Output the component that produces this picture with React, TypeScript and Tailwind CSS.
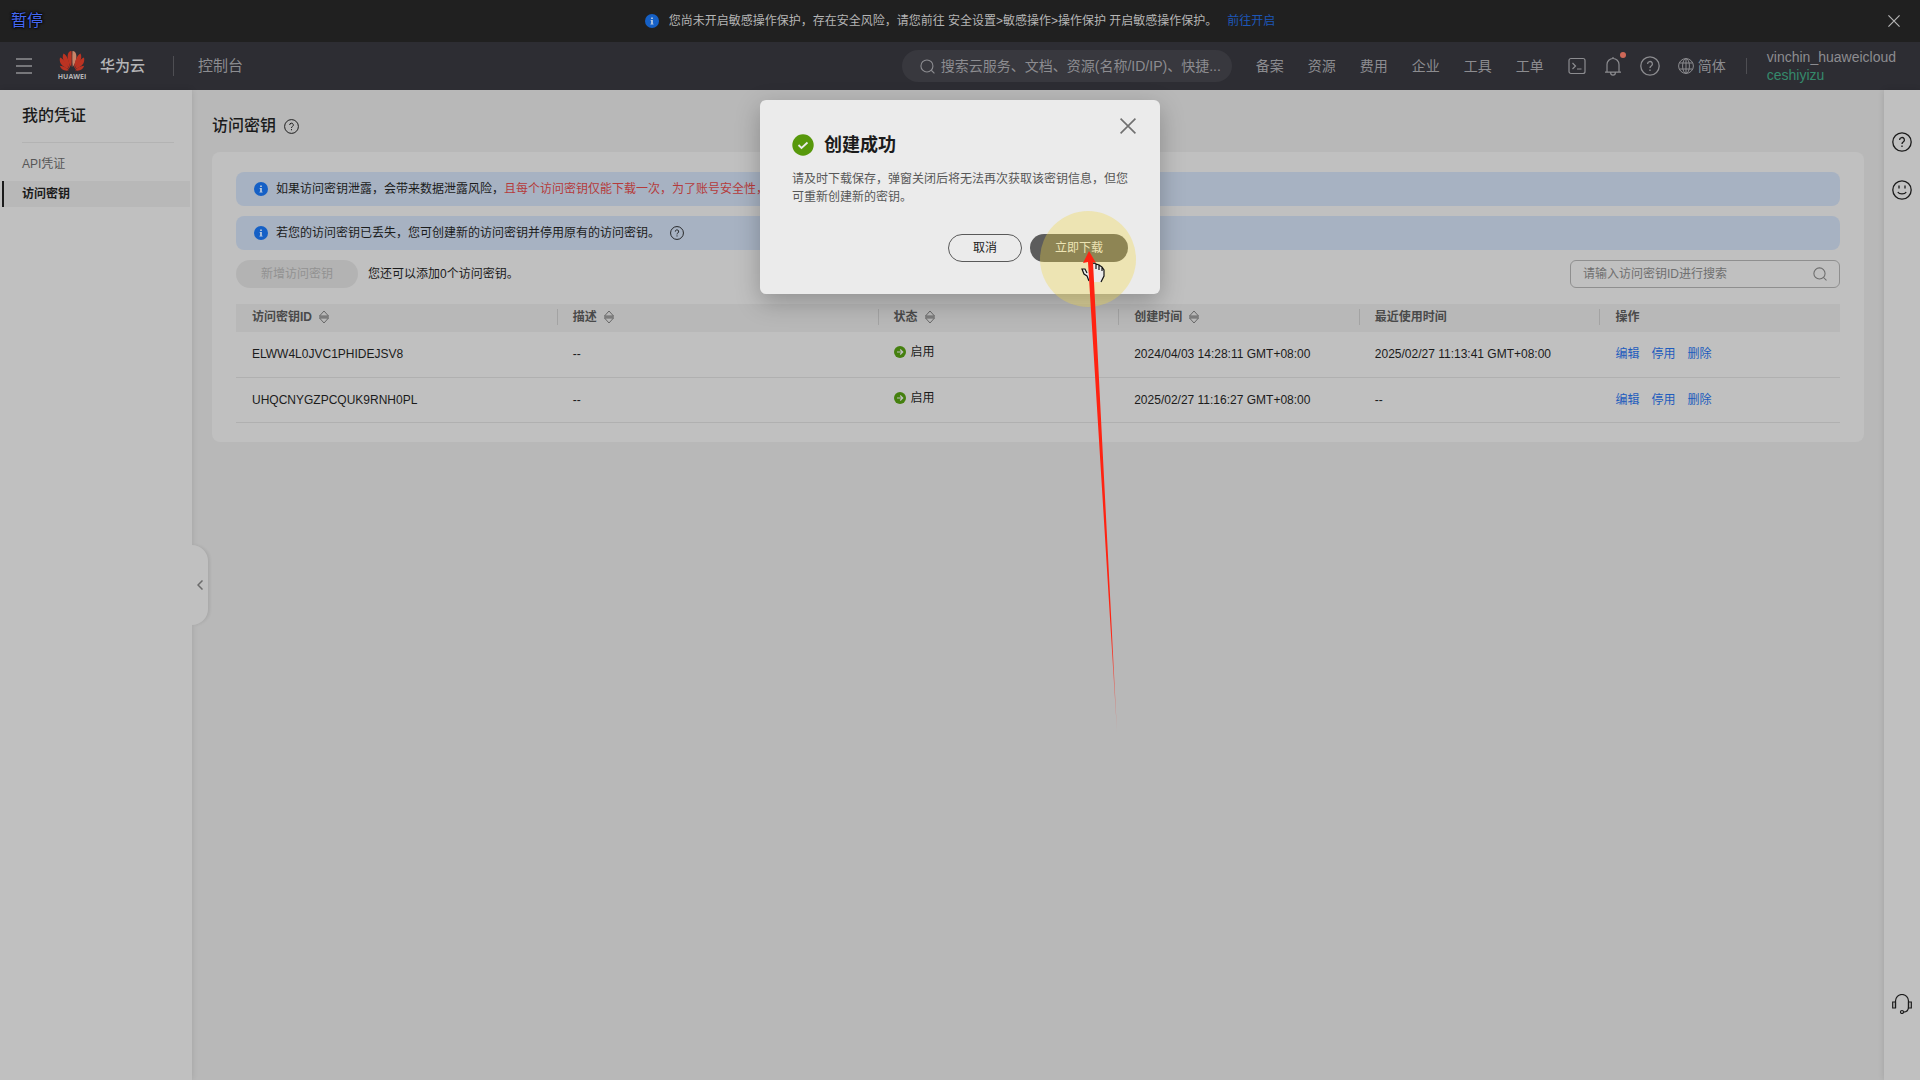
import React, { useState } from 'react';

// --- Types ---
interface AccessKey {
  id: string;
  desc: string;
  created: string;
  lastUsed: string;
}

interface IconProps {
  className?: string;
}

const accessKeys: AccessKey[] = [
  { id: 'ELWW4L0JVC1PHIDEJSV8', desc: '--', created: '2024/04/03 14:28:11 GMT+08:00', lastUsed: '2025/02/27 11:13:41 GMT+08:00' },
  { id: 'UHQCNYGZPCQUK9RNH0PL', desc: '--', created: '2025/02/27 11:16:27 GMT+08:00', lastUsed: '--' },
];

const columns = [
  { label: '访问密钥ID', width: 'w-[20%]', sortable: true },
  { label: '描述', width: 'w-[20%]', sortable: true },
  { label: '状态', width: 'w-[15%]', sortable: true },
  { label: '创建时间', width: 'w-[15%]', sortable: true },
  { label: '最近使用时间', width: 'w-[15%]', sortable: false },
  { label: '操作', width: 'w-[15%]', sortable: false },
];

const navItems = ['备案', '资源', '费用', '企业', '工具', '工单'];

// --- Icons ---
const InfoIcon = ({ className }: IconProps) => (
  <svg viewBox="0 0 16 16" className={className} aria-hidden="true">
    <circle cx="8" cy="8" r="8" fill="#1560c6" />
    <path d="M7 4h2v1.6H7zM6.4 6.8H9V11h.8v1H6.2v-1H7V7.8h-.6z" fill="#b9c9de" />
  </svg>
);

const HelpIcon = ({ className }: IconProps) => (
  <svg viewBox="0 0 20 20" fill="none" stroke="currentColor" strokeWidth="1.3" className={className} aria-hidden="true">
    <circle cx="10" cy="10" r="9.2" />
    <path d="M7.6 8a2.4 2.4 0 1 1 3.6 2c-.8.5-1.2.9-1.2 2" />
    <path d="M10 13.4v1.6" />
  </svg>
);

const CloseIcon = ({ className }: IconProps) => (
  <svg viewBox="0 0 14 14" fill="none" stroke="currentColor" strokeWidth="1.4" className={className} aria-hidden="true">
    <path d="M.5.5l13 13M13.5.5l-13 13" />
  </svg>
);

const SearchIcon = ({ className }: IconProps) => (
  <svg viewBox="0 0 16 16" fill="none" stroke="currentColor" strokeWidth="1.2" className={className} aria-hidden="true">
    <circle cx="7.4" cy="7.4" r="6.4" />
    <path d="M12 12l3.4 3.4" />
  </svg>
);

const SortIcon = () => (
  <svg viewBox="0 0 12 14" fill="none" stroke="#686868" className="h-3.5 w-3" aria-hidden="true">
    <path d="M1.5 6L6 1l4.5 5z" />
    <path d="M1.5 8L6 13l4.5-5z" />
    <path d="M1 7h10" />
  </svg>
);

const HuaweiLogo = () => (
  <svg viewBox="0 0 52 40" className="h-5 w-[26px]" aria-hidden="true">
    <g fill="#bb3322">
      <path d="M24.500 32C17 22 15 8 20 2c2-1.500 3.500-2 5-2 .8 10 .5 22-.5 32z" />
      <path d="M27.500 32C35 22 37 8 32 2c-2-1.500-3.500-2-5-2-.8 10-.5 22 .5 32z" fill="#c98468" />
      <path d="M22 34C12 27 4 15 9 5c7 3 12 16 13 29z" />
      <path d="M30 34c10-7 18-19 13-29-7 3-12 16-13 29z" />
      <path d="M20.500 36C9 33-1 26 2 13c9 4 14 13 18.500 23z" />
      <path d="M31.500 36C43 33 53 26 50 13c-9 4-14 13-18.500 23z" />
      <path d="M20 38.500C12 41 5 38 1.500 29.500c8 1 14 4 18.500 9z" />
      <path d="M32 38.500c8 2.500 15-.5 18.500-9-8 1-14 4-18.500 9z" />
    </g>
  </svg>
);

const TerminalIcon = () => (
  <svg viewBox="0 0 18 18" fill="none" stroke="currentColor" strokeWidth="1.2" className="size-[18px]" aria-hidden="true">
    <rect x="1" y="1.5" width="16" height="15" rx="2" />
    <path d="M4.5 6l3 3-3 3M9 12h4.500" />
  </svg>
);

const BellIcon = () => (
  <svg viewBox="0 0 18 20" fill="none" stroke="currentColor" strokeWidth="1.2" className="h-5 w-[18px]" aria-hidden="true">
    <path d="M1 16.200h16M3 16V8.500a6 6 0 0 1 12 0V16M9 2.500V1M6.600 16.500a2.400 2.600 0 0 0 4.800 0" />
  </svg>
);

const GlobeIcon = () => (
  <svg viewBox="0 0 16 16" fill="none" stroke="currentColor" className="size-4" aria-hidden="true">
    <circle cx="8" cy="8" r="7.4" />
    <ellipse cx="8" cy="8" rx="3.4" ry="7.4" />
    <path d="M8 .6v14.800M1.500 5h13M1.500 11h13" />
  </svg>
);

const SmileIcon = () => (
  <svg viewBox="0 0 20 20" fill="none" stroke="currentColor" strokeWidth="1.3" className="size-5" aria-hidden="true">
    <circle cx="10" cy="10" r="9.2" />
    <path d="M7 5.500v3M13 5.500v3M5.800 12c1.400 2.600 7 2.600 8.400 0" />
  </svg>
);

const HeadsetIcon = () => (
  <svg viewBox="0 0 20 20" fill="none" stroke="currentColor" strokeWidth="1.2" className="size-5" aria-hidden="true">
    <path d="M3.500 14V7a6.500 6.500 0 0 1 13 0v6c0 3-2 5-5 5.200" />
    <path d="M3.500 8H.7v6h2.800zM16.500 8h2.800v6h-2.800z" />
    <circle cx="10" cy="18" r="1.500" />
  </svg>
);

const EnabledIcon = () => (
  <svg viewBox="0 0 12 12" className="size-3" aria-hidden="true">
    <circle cx="6" cy="6" r="6" fill="#45800f" />
    <path d="M3 6h5.500M6.200 3.500L8.700 6 6.200 8.500" fill="none" stroke="#c0c0c0" strokeWidth="1.2" />
  </svg>
);

// Mouse highlight, hand cursor and the red pointer arrow
const Pointer = () => (
  <svg viewBox="0 0 100 530" className="pointer-events-none absolute left-[278px] top-[110px] z-30 h-[530px] w-[100px]" aria-hidden="true">
    <defs>
      <linearGradient id="arrow-fade" gradientUnits="userSpaceOnUse" x1="0" y1="420" x2="0" y2="522">
        <stop offset="0" stopColor="#ff2312" />
        <stop offset="1" stopColor="#ff2312" stopOpacity="0.3" />
      </linearGradient>
    </defs>
    <circle cx="50" cy="49" r="48" fill="#f0d545" fillOpacity="0.34" />
    <path d="M44 59h3l4 4v-9l5-1 6 2 4 5v6l-3 6H52l-5-6z" fill="#ebebeb" />
    <path
      d="M51 71l-2-5-3-2-2-5h3l2 4M54 54l2-1 2 1v5M58 54l3 1v5M61 55l3 2v4M64 57l2 3v6l-3 6"
      fill="none"
      stroke="#111"
      strokeWidth="1.2"
    />
    <path d="M51 41l7 12-3-1 24 470L50 52l-5 1z" fill="url(#arrow-fade)" />
  </svg>
);

function App() {
  const [query, setQuery] = useState('');
  const [keyword, setKeyword] = useState('');

  return (
    <div className="flex min-h-screen flex-col bg-[#b8b8b8] font-['Liberation_Sans','Noto_Sans_CJK_SC',sans-serif] text-xs text-[#1b1b1b]">
      {/* Notice bar */}
      <div className="relative flex h-[42px] items-center justify-center gap-2.5 bg-[#202020] text-[#b5b5b5]">
        <span className="absolute left-[11px] text-base text-[#4668f0] [text-shadow:0_0_2px_#000,0_0_2px_#000,0_0_3px_#000]">暂停</span>
        <InfoIcon className="size-3.5" />
        <span>您尚未开启敏感操作保护，存在安全风险，请您前往 安全设置&gt;敏感操作&gt;操作保护 开启敏感操作保护。</span>
        <a href="#protect" className="text-[#1d57b8]">前往开启</a>
        <button aria-label="关闭提示" className="absolute right-5 text-[#b5b5b5]">
          <CloseIcon className="size-3" />
        </button>
      </div>

      {/* Header */}
      <header className="flex h-12 items-center bg-[#2d2d33] text-sm text-[#8c8c90]">
        <button aria-label="菜单" className="ml-4 flex w-4 flex-col gap-[5px]">
          <span className="h-0.5 w-full bg-[#77777b]" />
          <span className="h-0.5 w-full bg-[#77777b]" />
          <span className="h-0.5 w-full bg-[#77777b]" />
        </button>
        <a href="#home" className="ml-[26px] flex items-center gap-3.5 text-[#b5b5b7]">
          <span className="flex w-7 flex-col items-center gap-0.5">
            <HuaweiLogo />
            <span className="font-['Open_Sans',sans-serif] text-[7px] font-bold leading-2">HUAWEI</span>
          </span>
          <span className="text-[15px] font-medium">华为云</span>
        </a>
        <span className="ml-7 mr-6 h-5 w-px bg-[#4e4e53]" />
        <a href="#console" className="text-[15px]">控制台</a>

        <label className="ml-auto flex h-8 w-[330px] items-center gap-1.5 rounded-full bg-[#38383e] pl-[18px] pr-2">
          <SearchIcon className="size-[15px] shrink-0" />
          <input
            aria-label="搜索"
            value={query}
            onChange={(e) => setQuery(e.target.value)}
            placeholder="搜索云服务、文档、资源(名称/ID/IP)、快捷..."
            className="w-full bg-transparent outline-none placeholder:text-[#8c8c90]"
          />
        </label>
        <nav className="ml-6 flex gap-6">
          {navItems.map((item) => (
            <a key={item} href="#nav">{item}</a>
          ))}
        </nav>
        <div className="ml-6 flex items-center gap-[18px]">
          <button aria-label="终端"><TerminalIcon /></button>
          <button aria-label="通知" className="relative">
            <BellIcon />
            <span className="absolute -right-1 -top-1 size-1.5 rounded-full bg-[#cf6858]" />
          </button>
          <button aria-label="帮助"><HelpIcon className="size-5" /></button>
          <button className="flex items-center gap-1"><GlobeIcon />简体</button>
        </div>
        <span className="mx-5 h-4 w-px bg-[#4e4e53]" />
        <div className="mr-6 leading-[18px]">
          <div>vinchin_huaweicloud</div>
          <div className="text-[#358a6c]">ceshiyizu</div>
        </div>
      </header>

      <div className="flex flex-1">
        {/* Sidebar */}
        <aside className="relative w-48 shrink-0 bg-[#c0c0c0] shadow-[0_0_6px_rgba(0,0,0,0.12)]">
          <h2 className="ml-[22px] mr-[18px] border-b border-[#b3b3b3] pb-3.5 pt-3.5 text-base font-medium">我的凭证</h2>
          <a href="#api" className="mt-1.5 flex h-[30px] items-center pl-[22px] text-[#575757]">API凭证</a>
          <a href="#keys" className="mx-0.5 mt-0.5 flex h-[26px] items-center border-l-2 border-[#1b1b1b] bg-[#b8b8b8] pl-[18px] font-bold">访问密钥</a>
          <button
            aria-label="收起"
            className="absolute left-full top-[455px] flex h-20 w-4 items-center justify-center rounded-r-2xl bg-[#c0c0c0] text-[#6b6b6b] shadow-[2px_0_3px_rgba(0,0,0,0.08)]"
          >
            <svg viewBox="0 0 6 10" fill="none" stroke="currentColor" strokeWidth="1.5" className="h-2.5 w-1.5" aria-hidden="true">
              <path d="M5.500.5L1 5l4.500 4.500" />
            </svg>
          </button>
        </aside>

        {/* Content */}
        <main className="flex-1 px-5 pt-[22px]">
          <h1 className="flex items-center gap-2 text-base font-medium leading-7">
            访问密钥
            <HelpIcon className="size-[15px]" />
          </h1>

          <section className="mt-3 rounded-lg bg-[#c0c0c0] px-6 pb-[19px] pt-5">
            <div className="flex h-[34px] items-center gap-2 overflow-hidden whitespace-nowrap rounded-lg bg-[#a7b2c2] px-[18px]">
              <InfoIcon className="size-3.5 shrink-0" />
              <span>如果访问密钥泄露，会带来数据泄露风险，<span className="text-[#b53b3b]">且每个访问密钥仅能下载一次，为了账号安全性，</span></span>
            </div>
            <div className="mt-2.5 flex h-[34px] items-center gap-2 rounded-lg bg-[#a7b2c2] px-[18px]">
              <InfoIcon className="size-3.5 shrink-0" />
              <span>若您的访问密钥已丢失，您可创建新的访问密钥并停用原有的访问密钥。</span>
              <HelpIcon className="ml-0.5 size-3.5" />
            </div>

            <div className="mt-2.5 flex items-center">
              <button disabled className="h-7 rounded-full bg-[#b3b3b3] px-[25px] text-[#929292]">新增访问密钥</button>
              <span className="ml-2.5">您还可以添加0个访问密钥。</span>
              <label className="ml-auto flex h-7 w-[270px] items-center rounded-md border border-[#8f8f8f] px-3">
                <input
                  aria-label="访问密钥ID"
                  value={keyword}
                  onChange={(e) => setKeyword(e.target.value)}
                  placeholder="请输入访问密钥ID进行搜索"
                  className="w-full bg-transparent outline-none placeholder:text-[#6f6f6f]"
                />
                <SearchIcon className="size-3.5 shrink-0 text-[#6b6b6b]" />
              </label>
            </div>

            <table className="mt-4 w-full table-fixed text-left">
              <thead>
                <tr className="h-7 bg-[#b8b8b8] text-[#4a4a4a]">
                  {columns.map((col, i) => (
                    <th key={col.label} className={`${col.width} pb-0.5 font-bold`}>
                      <div className={`flex h-4 items-center gap-1.5 ${i > 0 ? 'border-l border-[#a3a3a3] pl-[15px]' : 'pl-4'}`}>
                        {col.label}
                        {col.sortable && <SortIcon />}
                      </div>
                    </th>
                  ))}
                </tr>
              </thead>
              <tbody>
                {accessKeys.map((key) => (
                  <tr key={key.id} className="h-[45px] border-b border-[#b0b0b0]">
                    <td className="pl-4">{key.id}</td>
                    <td className="pl-4">{key.desc}</td>
                    <td className="pl-4">
                      <div className="flex items-center gap-[5px] pb-1"><EnabledIcon />启用</div>
                    </td>
                    <td className="pl-4">{key.created}</td>
                    <td className="pl-4">{key.lastUsed}</td>
                    <td className="pl-4">
                      <div className="flex gap-3 text-[#1d5cbd]">
                        <a href="#edit">编辑</a>
                        <a href="#disable">停用</a>
                        <a href="#delete">删除</a>
                      </div>
                    </td>
                  </tr>
                ))}
              </tbody>
            </table>
          </section>
        </main>

        {/* Right tool strip */}
        <aside className="flex w-9 shrink-0 flex-col items-center gap-7 bg-[#c0c0c0] pb-[66px] pt-[42px] shadow-[0_0_6px_rgba(0,0,0,0.12)]">
          <button aria-label="帮助中心"><HelpIcon className="size-5" /></button>
          <button aria-label="评价"><SmileIcon /></button>
          <button aria-label="客服" className="mt-auto"><HeadsetIcon /></button>
        </aside>
      </div>

      {/* Success dialog */}
      <div
        role="dialog"
        aria-label="创建成功"
        className="absolute left-1/2 top-[100px] z-20 w-[400px] -translate-x-1/2 rounded-md bg-[#ebebeb] p-8 shadow-[0_8px_24px_rgba(0,0,0,0.25)]"
      >
        <button aria-label="关闭" className="absolute right-6 top-[18px] text-[#707070]">
          <CloseIcon className="size-4" />
        </button>
        <h3 className="flex items-center gap-2.5 text-lg font-bold leading-[26px]">
          <svg viewBox="0 0 22 22" className="size-[22px]" aria-hidden="true">
            <circle cx="11" cy="11" r="10.7" fill="#57980b" />
            <path d="M6.500 11l3 3 6-5.500" fill="none" stroke="#ebebeb" strokeWidth="1.8" />
          </svg>
          创建成功
        </h3>
        <p className="mt-3 leading-[18px] text-[#575757]">
          请及时下载保存，弹窗关闭后将无法再次获取该密钥信息，但您可重新创建新的密钥。
        </p>
        <div className="mt-7 flex justify-end gap-2">
          <button className="h-7 rounded-full border border-[#595959] px-6">取消</button>
          <button className="h-7 rounded-full bg-[#5c5c5c] px-[25px] text-[#ebebeb]">立即下载</button>
        </div>
        <Pointer />
      </div>
    </div>
  );
}

export default App;
